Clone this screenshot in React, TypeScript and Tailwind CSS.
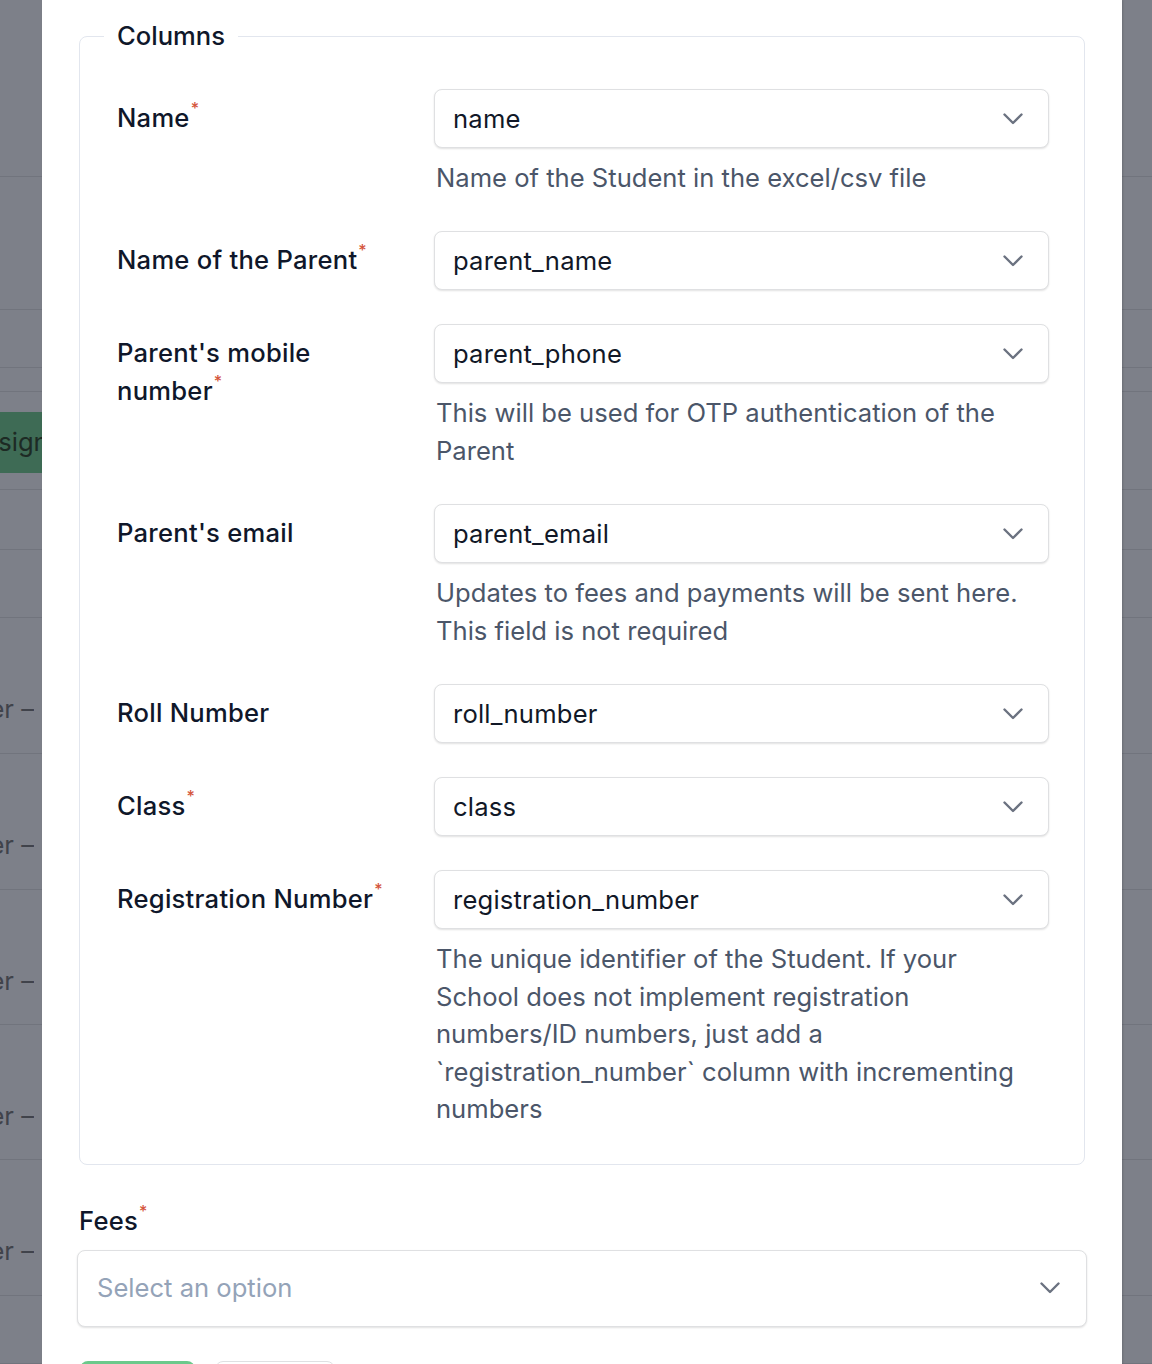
import React from "react";

type Field = {
  label: string;
  required?: boolean;
  value: string;
  help?: string[];
};

const fields: Field[] = [
  { label: "Name", required: true, value: "name", help: ["Name of the Student in the excel/csv file"] },
  { label: "Name of the Parent", required: true, value: "parent_name" },
  {
    label: "Parent's mobile number",
    required: true,
    value: "parent_phone",
    help: ["This will be used for OTP authentication of the", "Parent"],
  },
  {
    label: "Parent's email",
    value: "parent_email",
    help: ["Updates to fees and payments will be sent here.", "This field is not required"],
  },
  { label: "Roll Number", value: "roll_number" },
  { label: "Class", required: true, value: "class" },
  {
    label: "Registration Number",
    required: true,
    value: "registration_number",
    help: [
      "The unique identifier of the Student. If your",
      "School does not implement registration",
      "numbers/ID numbers, just add a",
      "`registration_number` column with incrementing",
      "numbers",
    ],
  },
];

// rows of the table behind the overlay
const bgRows = [
  { h: 177 },
  { h: 133 },
  { h: 58 },
  { h: 24 },
  { h: 98, button: true },
  { h: 60 },
  { h: 68 },
  { h: 136, text: true },
  { h: 136, text: true },
  { h: 135, text: true },
  { h: 135, text: true },
  { h: 136, text: true },
  { h: 68 },
];

function Chevron() {
  return (
    <svg width="20" height="12" viewBox="0 0 20 12" fill="none" className="shrink-0">
      <path d="M1.5 1.5 L10 10 L18.5 1.5" stroke="#6b7280" strokeWidth="2.4" strokeLinecap="round" strokeLinejoin="round" />
    </svg>
  );
}

function Star() {
  return <span className="ml-[1px] align-top text-[16px] leading-[18px] text-[#d4553b]">*</span>;
}

function SelectBox({ value, placeholder, tall }: { value?: string; placeholder?: string; tall?: boolean }) {
  return (
    <div
      className={`flex items-center justify-between rounded-[8px] border border-[#dfe0e2] bg-white shadow-[0_1px_2px_rgba(0,0,0,0.12)] ${
        tall ? "h-[77px] pl-[19px] pr-[26px]" : "h-[59px] pl-[18px] pr-[25px]"
      }`}
    >
      {value ? (
        <span className="text-[25.6px] leading-[38px] tracking-[0.2px] text-[#111827]">{value}</span>
      ) : (
        <span className="text-[25.6px] leading-[38px] text-[#94a3b8]">{placeholder}</span>
      )}
      <Chevron />
    </div>
  );
}

export default function App() {
  return (
    <div className="relative h-[1364px] w-[1152px] overflow-hidden bg-[#7d8089] font-['Inter',sans-serif]">
      {/* page behind the overlay */}
      <div className="flex flex-col">
        {bgRows.map((r, i) => (
          <div key={i} className="relative border-b border-[#71747d]" style={{ height: r.h }}>
            {r.button && (
              <div className="mt-[20px] flex h-[61px] w-[42px] items-center overflow-hidden bg-[#3e6b55]">
                <span className="ml-[-33px] whitespace-nowrap text-[25.6px] text-[#1d2a24]">Assign</span>
              </div>
            )}
            {r.text && (
              <div className="absolute left-0 top-[72px] flex w-[34px] justify-end overflow-hidden">
                <span className="whitespace-nowrap text-[25.6px] leading-[38px] text-[#40434b]">Teacher –</span>
              </div>
            )}
          </div>
        ))}
      </div>

      {/* modal */}
      <div className="absolute left-[42px] top-0 h-full w-[1080px] bg-white px-[35px] shadow-[1px_0_2px_rgba(0,0,0,0.15)]">
        <fieldset className="mx-[2px] mt-[17px] rounded-[8px] border border-[#e2e6ee] pb-[36px] pl-[37px] pr-[35px] pt-[34px]">
          <legend className="ml-[-13px] px-[13px] text-[25.6px] font-medium leading-[38px] text-[#0f172a]">Columns</legend>
          <div className="flex flex-col gap-[34px]">
            {fields.map((f) => (
              <div key={f.value} className="grid grid-cols-[317px_615px]">
                <div className="pr-[30px] pt-[10px] text-[25.6px] font-medium leading-[38px] tracking-[0.25px] text-[#0f172a]">
                  {f.label}
                  {f.required && <Star />}
                </div>
                <div>
                  <SelectBox value={f.value} />
                  {f.help && (
                    <div
                      className={`mt-[11px] pl-[2px] text-[25.6px] text-[#4b5669] ${
                        f.help.length > 2 ? "leading-[37.6px]" : "leading-[38px]"
                      }`}
                    >
                      {f.help.map((line) => (
                        <div key={line} className="whitespace-nowrap">
                          {line}
                        </div>
                      ))}
                    </div>
                  )}
                </div>
              </div>
            ))}
          </div>
        </fieldset>

        <div className="mt-[37px] pl-[2px] text-[25.6px] font-medium leading-[38px] tracking-[0.25px] text-[#0f172a]">
          Fees
          <Star />
        </div>
        <div className="mt-[10px]">
          <SelectBox placeholder="Select an option" tall />
        </div>

        <div className="mt-[34px] flex gap-[20px] pl-[3px]">
          <button className="h-[59px] w-[115px] rounded-[8px] bg-[#6bc98b] text-[25.6px] font-medium text-white">Save</button>
          <button className="h-[59px] w-[120px] rounded-[8px] border border-[#dfe0e2] bg-white text-[25.6px] font-medium text-[#111827]">
            Cancel
          </button>
        </div>
      </div>
    </div>
  );
}
